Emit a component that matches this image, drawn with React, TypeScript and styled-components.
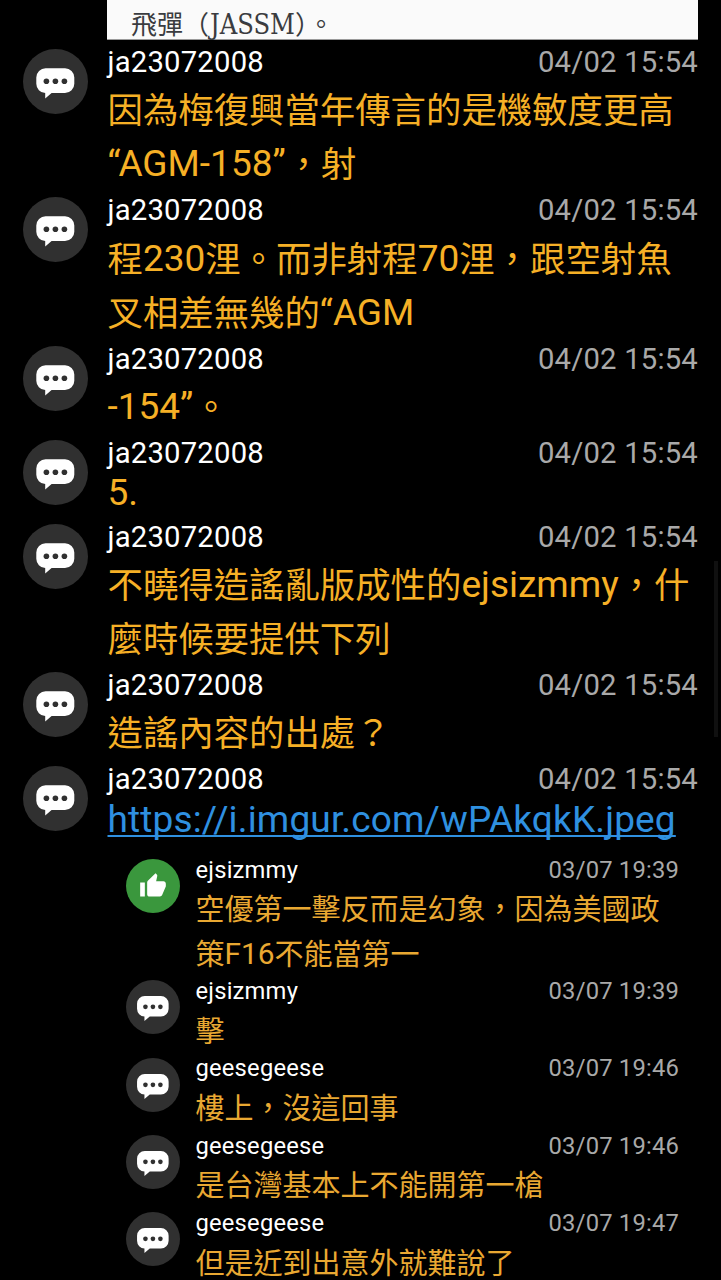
import React from "react";
import styled, { createGlobalStyle } from "styled-components";

const GlobalStyle = createGlobalStyle`
  html, body { margin: 0; background: #000; }
  body { overflow: hidden; }
`;

const Screen = styled.main`
  position: relative;
  width: 721px;
  height: 1280px;
  overflow: hidden;
  background: #000;
  font-family: Roboto, "Noto Sans CJK TC", sans-serif;
  font-weight: 400;
`;

const QuoteImage = styled.div`
  box-sizing: border-box;
  height: 40px;
  margin: 0 23px 3.3px 107px;
  padding-left: 24px;
  background: #fafafa;
  border-bottom: 1px solid #9a9a9a;
  color: #3a3c40;
  font-family: "Liberation Serif", "Noto Sans CJK TC", serif;
  font-size: 26px;
  line-height: 51px;
  white-space: nowrap;
`;

const QuoteLatin = styled.span`
  margin-left: 1px;
  font-family: "DejaVu Serif Condensed", "DejaVu Serif", serif;
  font-stretch: semi-condensed;
  font-size: 27px;
  line-height: 1px;
`;

type Size = "large" | "small";

const Thread = styled.section<{ $size: Size }>`
  padding: ${(p) => (p.$size === "large" ? "0 23px 0 23px" : "0 42px 0 126px")};
  margin-top: ${(p) => (p.$size === "large" ? "0" : "10.2px")};
`;

const Row = styled.article<{ $size: Size }>`
  display: grid;
  grid-template-columns: ${(p) => (p.$size === "large" ? "65px 1fr" : "54px 1fr")};
  column-gap: ${(p) => (p.$size === "large" ? "19.5px" : "15.5px")};
`;

const Avatar = styled.div<{ $size: Size; $tone: string }>`
  display: flex;
  align-items: center;
  justify-content: center;
  width: ${(p) => (p.$size === "large" ? 65 : 54)}px;
  height: ${(p) => (p.$size === "large" ? 65 : 54)}px;
  margin-top: ${(p) => (p.$size === "large" ? 5.9 : 4.2)}px;
  border-radius: 50%;
  background: ${(p) => p.$tone};
  svg { display: block; }
`;

const Header = styled.header<{ $size: Size }>`
  display: flex;
  justify-content: space-between;
  height: ${(p) => (p.$size === "large" ? 40.2 : 32.7)}px;
  font-size: ${(p) => (p.$size === "large" ? 29.25 : 23.75)}px;
  line-height: ${(p) => (p.$size === "large" ? 38.6 : 30.4)}px;
  letter-spacing: 0.2px;
  white-space: nowrap;
`;

const Name = styled.span`
  color: #fff;
`;

const Time = styled.time`
  color: #a9a9a9;
`;

const Line = styled.p<{ $size: Size; $plain?: boolean }>`
  margin: 0;
  padding-bottom: ${(p) => (p.$plain ? 6.3 : 0)}px;
  color: ${(p) => (p.$size === "large" ? "#f6b026" : "#e9a832")};
  font-size: ${(p) => (p.$size === "large" ? 37 : 29.8)}px;
  line-height: ${(p) => (p.$plain ? 37.6 : p.$size === "large" ? 54 : 44.5)}px;
  white-space: nowrap;
`;

const Han = styled.span<{ $size: Size }>`
  font-size: ${(p) => (p.$size === "large" ? 35.4 : 29)}px;
  line-height: 1px;
  vertical-align: -0.6px;
`;

const Link = styled.a`
  color: #2f90e0;
  letter-spacing: 0.15px;
  text-decoration: underline;
  text-decoration-thickness: 2px;
  text-underline-offset: 3px;
  text-decoration-skip-ink: none;
`;

const ScrollThumb = styled.div`
  position: absolute;
  top: 561px;
  right: 3px;
  width: 4px;
  height: 176px;
  background: #101010;
`;

function BubbleIcon({ size }: { size: number }) {
  return (
    <svg width={size} height={size} viewBox="0 0 65 65">
      <path
        fill="#fff"
        d="M22.6 19.2h19.4a9.3 9.3 0 0 1 9.3 9.3v6.2a9.3 9.3 0 0 1-9.3 9.3H28.6l-6.4 5.4V44a9.3 9.3 0 0 1-8.9-9.3v-6.2a9.3 9.3 0 0 1 9.3-9.3z"
      />
      <circle cx="23.4" cy="32.3" r="2.8" fill="#303030" />
      <circle cx="32.4" cy="32.3" r="2.8" fill="#303030" />
      <circle cx="41.4" cy="32.3" r="2.8" fill="#303030" />
    </svg>
  );
}

function ThumbIcon() {
  return (
    <svg width="28" height="28" viewBox="0 0 24 24" fill="#fff">
      <path d="M1 21h4V9H1v12zm22-11c0-1.1-.9-2-2-2h-6.31l.95-4.57.03-.32c0-.41-.17-.79-.44-1.06L14.17 1 7.59 7.59C7.22 7.95 7 8.45 7 9v10c0 1.1.9 2 2 2h9c.83 0 1.54-.5 1.84-1.22l3.02-7.05c.09-.23.14-.47.14-.73v-2z" />
    </svg>
  );
}

interface Comment {
  name: string;
  time: string;
  lines: string[];
  like?: boolean;
}

const HAN = /([\u3000-\u9fff\uff00-\uffef]+)/;

function CommentRow({ item, size }: { item: Comment; size: Size }) {
  return (
    <Row $size={size}>
      <Avatar $size={size} $tone={item.like ? "#3a973d" : "#303030"}>
        {item.like ? <ThumbIcon /> : <BubbleIcon size={size === "large" ? 65 : 54} />}
      </Avatar>
      <div>
        <Header $size={size}>
          <Name>{item.name}</Name>
          <Time>{item.time}</Time>
        </Header>
        {item.lines.map((line) => (
          <Line key={line} $size={size} $plain={!HAN.test(line)}>
            {line.startsWith("http") ? (
              <Link>{line}</Link>
            ) : (
              line
                .split(HAN)
                .filter(Boolean)
                .map((run, i) =>
                  HAN.test(run) ? (
                    <Han key={i} $size={size}>{run}</Han>
                  ) : (
                    <React.Fragment key={i}>{run}</React.Fragment>
                  )
                )
            )}
          </Line>
        ))}
      </div>
    </Row>
  );
}

const author = { name: "ja23072008", time: "04/02 15:54" };

const comments: Comment[] = [
  { ...author, lines: ["因為梅復興當年傳言的是機敏度更高", "“AGM-158”，射"] },
  { ...author, lines: ["程230浬。而非射程70浬，跟空射魚", "叉相差無幾的“AGM"] },
  { ...author, lines: ["-154”。"] },
  { ...author, lines: ["5."] },
  { ...author, lines: ["不曉得造謠亂版成性的ejsizmmy，什", "麼時候要提供下列"] },
  { ...author, lines: ["造謠內容的出處？"] },
  { ...author, lines: ["https://i.imgur.com/wPAkqkK.jpeg"] },
];

const replies: Comment[] = [
  { name: "ejsizmmy", time: "03/07 19:39", like: true, lines: ["空優第一擊反而是幻象，因為美國政", "策F16不能當第一"] },
  { name: "ejsizmmy", time: "03/07 19:39", lines: ["擊"] },
  { name: "geesegeese", time: "03/07 19:46", lines: ["樓上，沒這回事"] },
  { name: "geesegeese", time: "03/07 19:46", lines: ["是台灣基本上不能開第一槍"] },
  { name: "geesegeese", time: "03/07 19:47", lines: ["但是近到出意外就難說了"] },
];

export default function App() {
  return (
    <>
      <GlobalStyle />
      <Screen>
        <QuoteImage>
          飛彈（<QuoteLatin>JASSM</QuoteLatin>）。
        </QuoteImage>
        <Thread $size="large">
          {comments.map((c, i) => (
            <CommentRow key={i} item={c} size="large" />
          ))}
        </Thread>
        <Thread $size="small">
          {replies.map((c, i) => (
            <CommentRow key={i} item={c} size="small" />
          ))}
        </Thread>
        <ScrollThumb />
      </Screen>
    </>
  );
}
